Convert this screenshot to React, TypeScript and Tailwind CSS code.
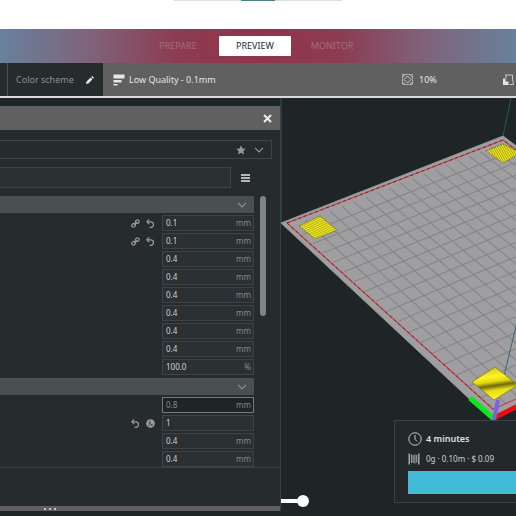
import type { ReactNode } from 'react';
import { clsx } from 'clsx';

type Point = [number, number];

type Setting = {
  name: string;
  value: string;
  unit?: string;
  icons?: 'link' | 'formula';
  muted?: boolean;
};

const qualitySettings: Setting[] = [
  { name: 'Layer height', value: '0.1', unit: 'mm', icons: 'link' },
  { name: 'Initial layer height', value: '0.1', unit: 'mm', icons: 'link' },
  { name: 'Line width', value: '0.4', unit: 'mm' },
  { name: 'Wall line width', value: '0.4', unit: 'mm' },
  { name: 'Outer wall line width', value: '0.4', unit: 'mm' },
  { name: 'Inner wall line width', value: '0.4', unit: 'mm' },
  { name: 'Top/bottom line width', value: '0.4', unit: 'mm' },
  { name: 'Infill line width', value: '0.4', unit: 'mm' },
  { name: 'Initial layer line width', value: '100.0', unit: '%' },
];

const shellSettings: Setting[] = [
  { name: 'Wall thickness', value: '0.8', unit: 'mm', muted: true },
  { name: 'Wall line count', value: '1', icons: 'formula' },
  { name: 'Wipe distance', value: '0.4', unit: 'mm' },
  { name: 'Top thickness', value: '0.4', unit: 'mm' },
];

/* Build plate corners: left, top, right, bottom */
const plate: Point[] = [[281, 223], [503, 136], [733, 309], [492, 420]];
const CELLS = 18;

// Perspective mapping from the unit square to the plate
function onPlate(u: number, v: number): Point {
  const [[x0, y0], [x1, y1], [x2, y2], [x3, y3]] = plate;
  const dx1 = x1 - x2;
  const dx2 = x3 - x2;
  const sx = x0 - x1 + x2 - x3;
  const dy1 = y1 - y2;
  const dy2 = y3 - y2;
  const sy = y0 - y1 + y2 - y3;
  const det = dx1 * dy2 - dx2 * dy1;
  const g = (sx * dy2 - dx2 * sy) / det;
  const h = (dx1 * sy - sx * dy1) / det;
  const w = g * u + h * v + 1;
  return [
    ((x1 - x0 + g * x1) * u + (x3 - x0 + h * x3) * v + x0) / w,
    ((y1 - y0 + g * y1) * u + (y3 - y0 + h * y3) * v + y0) / w,
  ];
}

function line(a: Point, b: Point) {
  return `M${a[0].toFixed(1)} ${a[1].toFixed(1)}L${b[0].toFixed(1)} ${b[1].toFixed(1)}`;
}

function gridPath() {
  const parts: string[] = [];
  for (let i = 1; i < CELLS; i++) {
    const t = 0.03 + (0.94 * i) / CELLS;
    parts.push(line(onPlate(t, 0.03), onPlate(t, 0.97)));
    parts.push(line(onPlate(0.03, t), onPlate(0.97, t)));
  }
  return parts.join('');
}

function BuildPlate() {
  return (
    <svg className="absolute inset-0 h-full w-full" viewBox="0 98 516 418" preserveAspectRatio="xMinYMin slice" aria-hidden="true">
      <defs>
        <pattern id="hatch" width="2" height="2" patternUnits="userSpaceOnUse" patternTransform="rotate(-25)">
          <rect width="2" height="2" fill="#f4ee1c" />
          <rect width="2" height="1" fill="#b5ae1c" />
        </pattern>
        <pattern id="hatchSteep" width="2" height="2" patternUnits="userSpaceOnUse" patternTransform="rotate(60)">
          <rect width="2" height="2" fill="#f4ee1c" />
          <rect width="2" height="1" fill="#aaa31c" />
        </pattern>
        <linearGradient id="glossy" x1="0.3" y1="0" x2="0.5" y2="1">
          <stop offset="0" stopColor="#c9bd10" />
          <stop offset="0.3" stopColor="#fff22a" />
          <stop offset="0.46" stopColor="#e0d80c" />
          <stop offset="0.58" stopColor="#6e680a" />
          <stop offset="0.72" stopColor="#e6de10" />
          <stop offset="1" stopColor="#fff838" />
        </linearGradient>
      </defs>
      <path d="M281 98V223M511 98L503 136" stroke="#2c5460" fill="none" />
      <polygon points={plate.map((p) => p.join(',')).join(' ')} fill="#9f9ea0" stroke="#8f9799" />
      <path d={gridPath()} stroke="#858587" strokeWidth="1.1" fill="none" />
      <polygon points="287,223 503,140 727,309 493,409" fill="none" stroke="#c4474d" strokeWidth="1.2" />
      <path d="M287 223L503 140L727 309M287 223L493 409" fill="none" stroke="#7d2227" strokeWidth="1" strokeDasharray="3 3" />
      <polygon points="299,226 320,216 337,230 315,239" fill="url(#hatch)" stroke="#6a6420" strokeWidth="0.8" strokeDasharray="2 1" />
      <polygon points="486,151 503,144 521,153 503,163" fill="url(#hatchSteep)" stroke="#6a6420" strokeWidth="0.8" strokeDasharray="2 1" />
      <path d="M517 322L504 376" stroke="#3b6675" fill="none" />
      <polygon points="472,382 495,367 518,385 494,400" fill="url(#glossy)" stroke="#8a7a14" strokeWidth="0.8" />
      <path d="M470 398L493 418" stroke="#0be81e" strokeWidth="5" />
      <path d="M494 418L520 405" stroke="#e90d10" strokeWidth="5" />
      <path d="M498 400L494 420" stroke="#7266e0" strokeWidth="4" />
    </svg>
  );
}

function Chevron() {
  return (
    <svg width="10" height="6" viewBox="0 0 10 6" fill="none" stroke="currentColor" strokeWidth="1.2">
      <path d="M1 0.8L5 4.8L9 0.8" />
    </svg>
  );
}

function LinkIcon() {
  return (
    <svg width="9" height="9" viewBox="0 0 9 9" fill="none" stroke="currentColor" strokeWidth="1.2">
      <rect x="4.7" y="0.9" width="3.2" height="3.6" rx="1.5" transform="rotate(45 6.3 2.7)" />
      <rect x="1" y="4.5" width="3.2" height="3.6" rx="1.5" transform="rotate(45 2.6 6.3)" />
      <path d="M3.2 5.8L5.8 3.2" />
    </svg>
  );
}

function ResetIcon() {
  return (
    <svg width="9" height="9" viewBox="0 0 9 9" fill="none" stroke="currentColor" strokeWidth="1.2">
      <path d="M1 2.8H5.2A2.8 2.8 0 0 1 5.2 8.3H3.6" />
      <path d="M3.2 0.4L0.8 2.8L3.2 5.2" />
    </svg>
  );
}

function FormulaIcon() {
  return (
    <svg width="9" height="9" viewBox="0 0 9 9">
      <circle cx="4.5" cy="4.5" r="4.3" fill="currentColor" />
      <path d="M5 1.8C3.8 1.8 3.8 3 3.6 4.4C3.4 6 3.2 7 2.4 7M2.8 3.8H4.8M4.8 4.8L6.6 7M6.6 4.8L4.6 7" stroke="#262b2e" strokeWidth="0.7" fill="none" />
    </svg>
  );
}

function CategoryHeader({ label }: { label: string }) {
  return (
    <button aria-label={label} className="flex h-[17px] w-full items-center justify-end bg-[#4a4f52] pr-[7px] text-[#8b9092]">
      <Chevron />
    </button>
  );
}

function SettingRow({ setting }: { setting: Setting }) {
  return (
    <div className="flex h-4 items-center justify-end gap-[7px]">
      {setting.icons && (
        <div className="flex items-center gap-1.5 text-[#9a9d9e]">
          {setting.icons === 'link' ? <LinkIcon /> : <ResetIcon />}
          {setting.icons === 'link' ? <ResetIcon /> : <FormulaIcon />}
        </div>
      )}
      <label
        className={clsx(
          'flex h-full w-[92px] items-center border pr-0.5 pl-[3px] text-[8px]',
          setting.muted ? 'border-[#74787a] bg-[#1f2427]' : 'border-[#3e4346] bg-[#2b3033]',
        )}
      >
        <input
          aria-label={setting.name}
          defaultValue={setting.value}
          className={clsx('min-w-0 flex-1 bg-transparent outline-none', setting.muted ? 'text-[#85898b]' : 'text-[#d0d2d3]')}
        />
        <span className="text-[#85898b]">{setting.unit}</span>
      </label>
    </div>
  );
}

function SettingGroup({ label, settings }: { label: string; settings: Setting[] }) {
  return (
    <section className="flex flex-col gap-0.5">
      <CategoryHeader label={label} />
      {settings.map((setting) => (
        <SettingRow key={setting.name} setting={setting} />
      ))}
    </section>
  );
}

function SettingsPanel() {
  return (
    <aside className="relative mt-2 flex w-[281px] flex-col border-r border-[#3a4043] bg-[#262b2e]">
      {/* Title bar */}
      <div className="flex h-6 items-center justify-end bg-[#606060] pr-2">
        <button aria-label="Close" className="text-[#efefef]">
          <svg width="9" height="9" viewBox="0 0 9 9" stroke="currentColor" strokeWidth="2">
            <path d="M1 1L8 8M8 1L1 8" />
          </svg>
        </button>
      </div>

      {/* Profile */}
      <button aria-label="Profile" className="mt-2.5 mr-2 flex h-[19px] items-center justify-end gap-2 border border-l-0 border-[#3e4346] pr-[7px] text-[#95999b]">
        <svg width="10" height="10" viewBox="0 0 10 10" fill="currentColor">
          <path d="M5 0.3L6.4 3.4L9.8 3.8L7.3 6.1L8 9.5L5 7.8L2 9.5L2.7 6.1L0.2 3.8L3.6 3.4Z" />
        </svg>
        <Chevron />
      </button>

      {/* Search */}
      <div className="mt-2 flex items-center gap-2.5">
        <input aria-label="Search settings" className="h-[21px] w-[231px] border border-l-0 border-[#3e4346] bg-[#2b3033] px-2 text-[8px] text-[#d0d2d3] outline-none" />
        <button aria-label="Setting visibility" className="text-[#e4e6e7]">
          <svg width="9" height="8" viewBox="0 0 9 8" stroke="currentColor" strokeWidth="1.5">
            <path d="M0 1H9M0 4H9M0 7H9" />
          </svg>
        </button>
      </div>

      {/* Settings */}
      <div className="mt-2 flex border-b border-[#3a4043]">
        <div className="flex w-[254px] flex-col gap-[3px]">
          <SettingGroup label="Quality" settings={qualitySettings} />
          <SettingGroup label="Shell" settings={shellSettings} />
        </div>
        <div className="ml-1.5 h-[120px] w-1.5 rounded-full bg-[#7f8486]" />
      </div>

      {/* Resize handle */}
      <div className="mt-auto flex h-[5px] items-center gap-[3px] bg-[#606060] pl-11">
        <span className="size-0.5 rounded-full bg-[#e4e6e7]" />
        <span className="size-0.5 rounded-full bg-[#e4e6e7]" />
        <span className="size-0.5 rounded-full bg-[#e4e6e7]" />
      </div>
    </aside>
  );
}

function PrintInfo() {
  return (
    <section className="absolute top-[322px] right-0 left-[394px] border border-r-0 border-[#3c4144] bg-[#23282b] pt-2.5 pb-2 pl-[13px]">
      <div className="flex h-4 items-center gap-1 text-[9px] font-semibold text-[#dfe1e2]">
        <svg width="14" height="14" viewBox="0 0 14 14" fill="none" stroke="#c4c8ca">
          <circle cx="7" cy="7" r="6.2" />
          <path d="M7 3V7.3L9 9.3" />
        </svg>
        4 minutes
      </div>
      <div className="mt-1 flex h-4 items-center gap-1.5 text-[8px] whitespace-nowrap text-[#cdd0d1]">
        <svg width="12" height="12" viewBox="0 0 12 12" fill="none" stroke="#c4c8ca" strokeWidth="1.2">
          <path d="M1.2 0.5V11.5M10.8 0.5V11.5" />
          <path d="M3.5 1.5V10M5.2 2V10M6.9 1.5V10.5M8.6 2V9.5" stroke="#8f9496" />
        </svg>
        0g · 0.10m · $ 0.09
      </div>
      <button aria-label="Save to file" className="mt-1 block h-[23px] w-full bg-[#41bbd7]" />
    </section>
  );
}

function StageTab({ active, children }: { active?: boolean; children: ReactNode }) {
  return (
    <button className={clsx('h-5 w-[72px] rounded-[1px] text-[9px]', active ? 'bg-white text-[#23282b]' : 'text-[#a0707b]')}>
      {children}
    </button>
  );
}

export default function App() {
  return (
    <div className="flex min-h-screen flex-col overflow-hidden bg-[#1f2427] font-['Noto_Sans',sans-serif]">
      <div className="flex h-[29px] items-start justify-center bg-white">
        <div className="flex h-px w-[168px] justify-center bg-[#dcdfe0]">
          <div className="h-px w-[34px] bg-[#4c7f88]" />
        </div>
      </div>

      <nav className="flex h-[34px] items-center justify-center gap-[5px] bg-[linear-gradient(90deg,#68819c_0%,#80627a_18%,#8c3c52_34%,#92334a_50%,#8c3c52_66%,#80627a_82%,#68819c_100%)] pr-1.5">
        <StageTab>PREPARE</StageTab>
        <StageTab active>PREVIEW</StageTab>
        <StageTab>MONITOR</StageTab>
      </nav>

      {/* Toolbar */}
      <header className="flex h-[35px] border-b-2 border-[#d8dadb] bg-[#606060] text-[9px] text-[#e6e6e6]">
        <button className="flex w-[103px] items-center bg-[#262b2e] text-[#8b9092]">
          <span className="h-full w-2 border-r border-[#4a4f52]" />
          <span className="ml-2 whitespace-nowrap">Color scheme</span>
          <svg className="mr-[9px] ml-auto" width="8" height="8" viewBox="0 0 8 8" fill="#e6e6e6">
            <path d="M0 8L0.6 5.6L4.6 1.6L6.4 3.4L2.4 7.4ZM5.2 1L6.2 0L8 1.8L7 2.8Z" />
          </svg>
        </button>
        <button className="flex flex-1 items-center gap-1 pl-2.5">
          <svg width="12" height="12" viewBox="0 0 12 12" fill="#e6e6e6">
            <path d="M0.500 0.500H11.500V4.500H0.500ZM0.500 6H8.500V8.500H0.500ZM0.500 10H4.500V11.500H0.500Z" />
          </svg>
          Low Quality - 0.1mm
        </button>
        <button className="flex w-[101px] items-center gap-1.5">
          <svg width="11" height="11" viewBox="0 0 11 11" fill="none" stroke="#c9c9c9" strokeWidth="1">
            <path d="M0.500 0.500H10.500V10.500H0.500Z" strokeDasharray="2 1" />
            <path d="M0.500 3L3 0.500M8 0.500L10.500 3M10.500 8L8 10.500M3 10.500L0.500 8M5.500 2L9 5.500L5.500 9L2 5.500Z" />
          </svg>
          10%
        </button>
        <button aria-label="Support" className="flex w-[13px] items-center">
          <svg width="11" height="12" viewBox="0 0 11 12">
            <path d="M0 11V4.500H2.500V7.500H5.500V11Z" fill="#e6e6e6" />
            <path d="M3 4.500V1H9.500V5L10.500 10.500H6.500M2 1H3" fill="none" stroke="#c9c9c9" />
          </svg>
        </button>
      </header>

      {/* Viewport */}
      <main className="relative flex flex-1 pb-[5px]">
        <BuildPlate />
        <SettingsPanel />
        <input type="range" aria-label="Simulation step" defaultValue="100" className="absolute top-[397px] left-[281px] h-3 w-7 appearance-none bg-[linear-gradient(white,white)] bg-[length:24px_4px] bg-[position:0_center] bg-no-repeat [&::-webkit-slider-thumb]:size-3 [&::-webkit-slider-thumb]:appearance-none [&::-webkit-slider-thumb]:rounded-full [&::-webkit-slider-thumb]:bg-white" />
        <PrintInfo />
      </main>
    </div>
  );
}
